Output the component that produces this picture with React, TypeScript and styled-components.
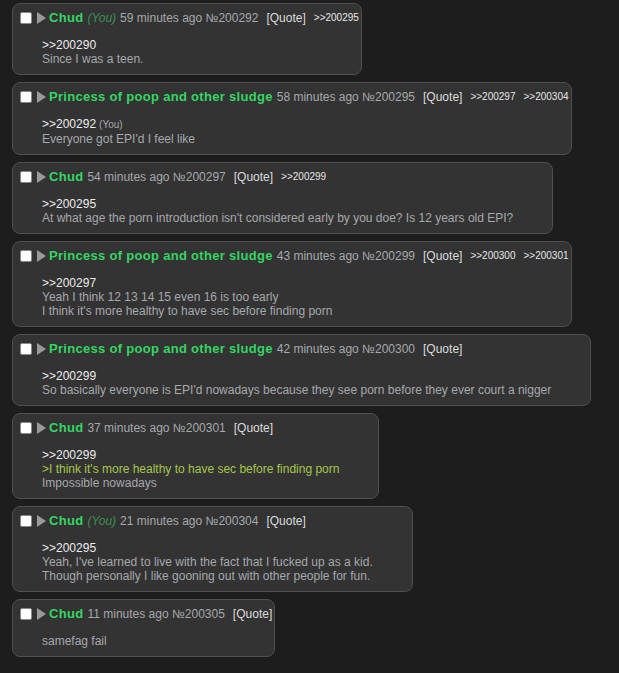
import React from "react";
import styled, { createGlobalStyle } from "styled-components";

type Line = { text: string; green?: boolean };

type PostData = {
  id: number;
  name: string;
  you?: boolean;
  ago: string;
  backlinks: number[];
  quote?: number;
  quoteYou?: boolean;
  lines: Line[];
};

const posts: PostData[] = [
  {
    id: 200292,
    name: "Chud",
    you: true,
    ago: "59 minutes ago",
    backlinks: [200295],
    quote: 200290,
    lines: [{ text: "Since I was a teen." }],
  },
  {
    id: 200295,
    name: "Princess of poop and other sludge",
    ago: "58 minutes ago",
    backlinks: [200297, 200304],
    quote: 200292,
    quoteYou: true,
    lines: [{ text: "Everyone got EPI'd I feel like" }],
  },
  {
    id: 200297,
    name: "Chud",
    ago: "54 minutes ago",
    backlinks: [200299],
    quote: 200295,
    lines: [
      {
        text: "At what age the porn introduction isn't considered early by you doe? Is 12 years old EPI?",
      },
    ],
  },
  {
    id: 200299,
    name: "Princess of poop and other sludge",
    ago: "43 minutes ago",
    backlinks: [200300, 200301],
    quote: 200297,
    lines: [
      { text: "Yeah I think 12 13 14 15 even 16 is too early" },
      { text: "I think it's more healthy to have sec before finding porn" },
    ],
  },
  {
    id: 200300,
    name: "Princess of poop and other sludge",
    ago: "42 minutes ago",
    backlinks: [],
    quote: 200299,
    lines: [
      {
        text: "So basically everyone is EPI'd nowadays because they see porn before they ever court a nigger",
      },
    ],
  },
  {
    id: 200301,
    name: "Chud",
    ago: "37 minutes ago",
    backlinks: [],
    quote: 200299,
    lines: [
      { text: ">I think it's more healthy to have sec before finding porn", green: true },
      { text: "Impossible nowadays" },
    ],
  },
  {
    id: 200304,
    name: "Chud",
    you: true,
    ago: "21 minutes ago",
    backlinks: [],
    quote: 200295,
    lines: [
      { text: "Yeah, I've learned to live with the fact that I fucked up as a kid." },
      { text: "Though personally I like gooning out with other people for fun." },
    ],
  },
  {
    id: 200305,
    name: "Chud",
    ago: "11 minutes ago",
    backlinks: [],
    lines: [{ text: "samefag fail" }],
  },
];

const GlobalStyle = createGlobalStyle`
  html, body {
    margin: 0;
    background: #1d1d1d;
  }
  body {
    font-family: "Liberation Sans", Arial, sans-serif;
    font-size: 12px;
    color: #a6a8ab;
  }
`;

const Thread = styled.div`
  display: flex;
  flex-direction: column;
  align-items: flex-start;
  gap: 7px;
  padding: 3px 0 12px 12px;
  min-height: 673px;
  box-sizing: border-box;
`;

const Post = styled.div`
  background: #333333;
  border: 1px solid #4f4f4f;
  border-radius: 8px;
  padding: 4px 2px 0 7px;
`;

const Header = styled.div`
  display: flex;
  align-items: center;
  height: 19px;
  white-space: nowrap;
`;

const Check = styled.input.attrs({ type: "checkbox" })`
  appearance: none;
  margin: 0;
  width: 12px;
  height: 12px;
  background: #ffffff;
  border: 1px solid #8a8a8a;
  border-radius: 2px;
  box-sizing: border-box;
`;

const Toggle = styled.svg`
  margin: 0 3px 0 5px;
  flex: none;
`;

const Name = styled.span`
  color: #33d563;
  font-weight: bold;
  font-size: 13px;
  letter-spacing: 0.3px;
`;

const You = styled.span`
  color: #3f8f55;
  font-style: italic;
  margin-left: 4px;
`;

const Meta = styled.span`
  color: #a6a8ab;
  margin-left: 4px;
`;

const QuoteLink = styled.span`
  color: #dcdcdc;
  margin-left: 8px;
`;

const Backlink = styled.span`
  color: #e6e6e6;
  font-size: 10px;
  margin-left: 8px;
`;

const Body = styled.blockquote`
  margin: 11px 37px 8px 22px;
  line-height: 14px;
`;

const Ref = styled.span`
  color: #ececec;
`;

const RefYou = styled.span`
  color: #a6a8ab;
  font-size: 10px;
  margin-left: 3px;
`;

const Text = styled.div<{ $green?: boolean }>`
  color: ${(p) => (p.$green ? "#a7c64c" : "#a6a8ab")};
`;

function PostCard({ post }: { post: PostData }) {
  return (
    <Post>
      <Header>
        <Check />
        <Toggle width="9" height="12" viewBox="0 0 9 12">
          <polygon points="0,0 9,6 0,12" fill="#9a9a9a" />
        </Toggle>
        <Name>{post.name}</Name>
        {post.you && <You>(You)</You>}
        <Meta>
          {post.ago} №{post.id}
        </Meta>
        <QuoteLink>[Quote]</QuoteLink>
        {post.backlinks.map((b) => (
          <Backlink key={b}>&gt;&gt;{b}</Backlink>
        ))}
      </Header>
      <Body>
        {post.quote && (
          <div>
            <Ref>&gt;&gt;{post.quote}</Ref>
            {post.quoteYou && <RefYou>(You)</RefYou>}
          </div>
        )}
        {post.lines.map((l, i) => (
          <Text key={i} $green={l.green}>
            {l.text}
          </Text>
        ))}
      </Body>
    </Post>
  );
}

export default function App() {
  return (
    <>
      <GlobalStyle />
      <Thread>
        {posts.map((p) => (
          <PostCard key={p.id} post={p} />
        ))}
      </Thread>
    </>
  );
}
